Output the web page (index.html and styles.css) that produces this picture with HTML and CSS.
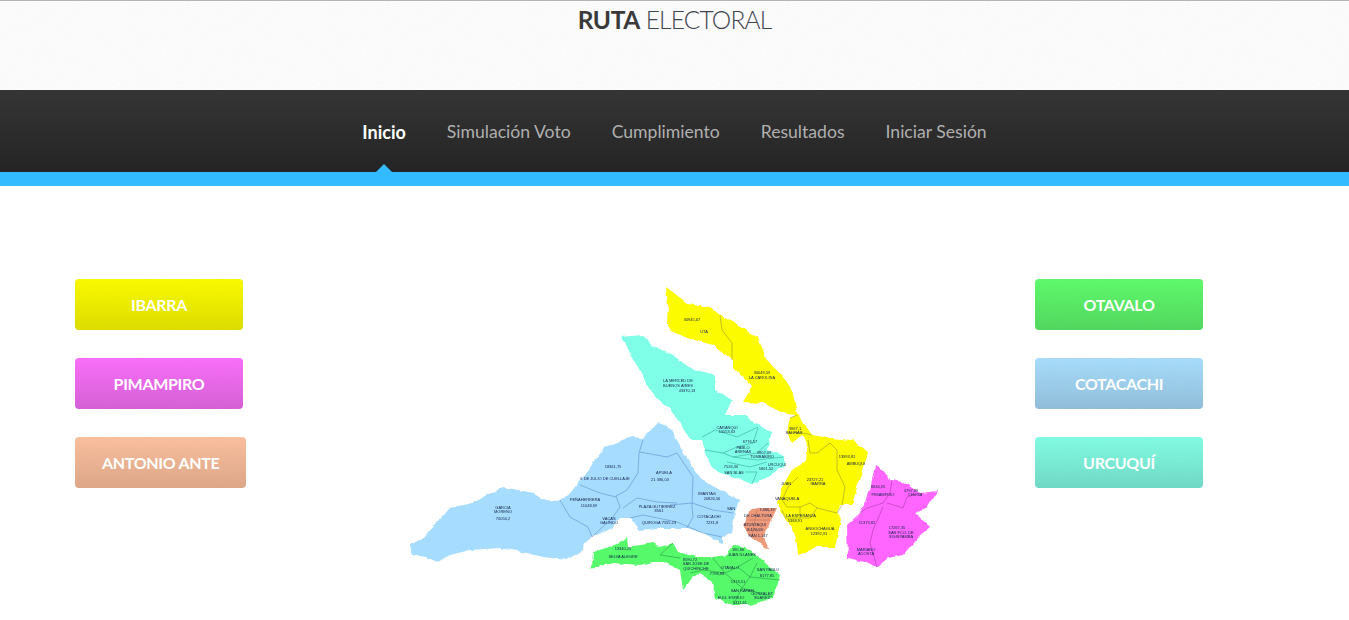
FILE: index.html
```html
<!DOCTYPE html>
<html lang="es">
<head>
<meta charset="utf-8">
<title>Ruta Electoral</title>
<link rel="stylesheet" href="styles.css">
</head>
<body>
<header class="brand">
  <h1 class="brand-title"><strong>RUTA</strong> ELECTORAL</h1>
</header>
<nav class="nav">
  <ul class="nav-list">
    <li class="nav-item nav-item-active"><a href="#">Inicio</a></li>
    <li class="nav-item"><a href="#">Simulación Voto</a></li>
    <li class="nav-item"><a href="#">Cumplimiento</a></li>
    <li class="nav-item"><a href="#">Resultados</a></li>
    <li class="nav-item"><a href="#">Iniciar Sesión</a></li>
  </ul>
</nav>
<div class="nav-stripe"></div>
<main class="content">
  <div class="canton-col">
    <a class="btn btn-ibarra" href="#">IBARRA</a>
    <a class="btn btn-pimampiro" href="#">PIMAMPIRO</a>
    <a class="btn btn-ante" href="#">ANTONIO ANTE</a>
  </div>
  <svg class="map" viewBox="400 279 560 341" width="560" height="341" role="img" aria-label="Mapa de Imbabura">
    <defs>
      <filter id="rough" x="-5%" y="-5%" width="110%" height="110%">
        <feTurbulence type="fractalNoise" baseFrequency="0.11" numOctaves="2" seed="4"/>
        <feDisplacementMap in="SourceGraphic" scale="4" xChannelSelector="R" yChannelSelector="G"/>
        <feGaussianBlur stdDeviation="0.6"/>
      </filter>
      <filter id="soft"><feGaussianBlur stdDeviation="0.3"/></filter>
    </defs>
    <g filter="url(#rough)">
      <polygon class="z-blue" points="410,545 425,537 435,525 450,508 473,503 503,487 533,493 550,502 567,497 583,477 605,447 630,437 643,438 658,423 670,427 677,440 688,460 702,480 720,490 739,500 735,513 732,533 722,537 722,543 703,533 687,528 677,528 657,528 640,530 630,518 620,518 613,528 592,537 585,543 583,550 567,560 543,557 523,552 500,548 470,550 450,555 437,562 427,557 412,555"/>
      <polygon class="z-turq" points="620,337 643,335 653,347 670,353 690,368 715,375 715,390 732,400 725,415 747,415 753,423 772,432 767,450 785,456 785,465 770,475 752,484 733,477 713,470 705,453 702,440 690,440 683,428 670,408 663,405 648,387 638,367 630,355 625,342"/>
      <polygon class="z-yellow" points="666,287 670,290 687,303 710,307 720,315 745,330 758,338 767,360 783,377 793,393 797,413 812,435 830,438 852,440 868,453 860,477 852,505 840,505 838,513 841,520 835,547 817,547 798,555 797,543 792,527 785,518 777,503 782,487 792,470 805,462 807,440 802,435 792,443 787,432 790,418 795,415 783,413 763,403 743,402 752,387 733,367 733,360 713,345 687,338 670,330 667,323 668,305"/>
      <polygon class="z-green" points="580,568 592,567 593,552 620,543 627,537 628,547 653,543 660,547 673,543 678,552 697,557 712,557 727,555 735,545 745,547 753,553 770,567 780,575 777,587 773,598 750,605 733,605 715,598 712,582 700,573 693,577 683,590 680,570 670,565 663,562 653,562 640,565 613,563 597,567"/>
      <polygon class="z-magenta" points="875,465 883,470 890,480 903,482 920,493 938,491 928,507 915,513 930,527 918,537 903,555 888,558 877,567 865,562 848,558 847,525 860,513 870,490"/>
      <polygon class="z-orange" points="748,510 758,508 777,508 770,523 763,537 770,550 750,537 744,527"/>
    </g>
    <g filter="url(#soft)">
      <path class="b-blue" d="M643 440L639 453 638 473 627 490 616 496 620 507 613 517 592 537M580 485L600 493 616 497M560 500L570 517 588 527 592 537M640 452L667 457 677 453 683 462 693 477 692 507 693 517 687 528M670 505L692 503 713 510 733 513M623 508L637 498 657 502 677 503M630 518L643 515 677 522 703 533 722 537"/>
      <path class="b-yellow" d="M720 315L722 330 732 343 732 360M790 418L797 415M787 432L803 433 812 435M808 440L810 453 817 453 830 443 837 450 837 470 845 487 842 505 837 513 817 508 810 503 800 507 787 507 782 500 788 487 798 477M782 510L785 518 800 518 800 507M817 508L810 518 800 518"/>
      <path class="b-magenta" d="M892 480L890 493 883 503 867 508 860 513M883 507L873 530 870 543 877 567M887 503L903 508 907 497 920 493"/>
      <path class="b-green" d="M712 557L725 573 738 567 753 558M725 573L703 570 690 573M738 567L750 577 780 580M750 577L742 588 733 605M725 573L742 588 773 597M757 563L750 577M660 555L673 543M660 555L680 558"/>
      <path class="b-turq" d="M702 437L715 430 737 437 758 427M705 450L723 453 737 447 753 443 758 428M723 453L733 457 757 453 768 443M733 457L757 460 783 457M727 462L750 467 767 462M752 484L757 472 745 472"/>
      <path class="b-orange" d="M748 520L770 520M746 530L765 530M757 510L752 535"/>
      <g class="lbl">
        <text x="503" y="509">GARCIA</text><text x="503" y="513">MORENO</text><text x="503" y="520">70050,2</text>
        <text x="613" y="468">18361,75</text><text x="605" y="480">6 DE JULIO DE CUELLAJE</text>
        <text x="664" y="474">APUELA</text><text x="660" y="481">21 386,03</text>
        <text x="585" y="501">PEÑAHERRERA</text><text x="589" y="507">11048,69</text>
        <text x="609" y="520">VACAS</text><text x="609" y="524">GALINDO</text>
        <text x="657" y="508">PLAZA GUTIERREZ</text><text x="659" y="512">8561</text>
        <text x="659" y="524">QUIROGA 7555,23</text>
        <text x="707" y="495">IMANTAG</text><text x="712" y="500">20826,56</text><text x="731" y="510">SAN</text>
        <text x="709" y="518">COTACACHI</text><text x="712" y="524">7231,8</text>
        <text x="623" y="550">13340,25</text><text x="623" y="558">SELVA ALEGRE</text>
        <text x="692" y="321">30945,67</text><text x="704" y="333">UTA</text>
        <text x="762" y="374">30049,59</text><text x="762" y="379">LA CAROLINA</text>
        <text x="678" y="382">LA MERCED DE</text><text x="678" y="387">BUENOS AIRES</text><text x="687" y="392">43370,13</text>
        <text x="727" y="429">CARANQUI</text><text x="727" y="433">10553,63</text>
        <text x="750" y="443">6776,57</text><text x="743" y="449">PABLO</text><text x="743" y="453">ARENAS</text>
        <text x="764" y="454">3802,09</text><text x="762" y="458">TUMBABIRO</text>
        <text x="731" y="468">7526,36</text><text x="734" y="474">SAN BLAS</text>
        <text x="777" y="466">URCUQUI</text><text x="766" y="470">5861,52</text>
        <text x="795" y="430">3967,1</text><text x="794" y="434">SALINAS</text>
        <text x="847" y="458">13993,81</text><text x="856" y="465">AMBUQUI</text>
        <text x="815" y="481">23727,21</text><text x="818" y="485">IBARRA</text>
        <text x="786" y="485">JUAN</text><text x="787" y="500">VANAQUELA</text>
        <text x="801" y="517">LA ESPERANZA</text><text x="795" y="522">5368,91</text>
        <text x="820" y="530">ANGOCHAGUA</text><text x="819" y="535">12392,91</text>
        <text x="878" y="488">8634,95</text><text x="883" y="496">PIMAMPIRO</text>
        <text x="911" y="492">4797,89</text><text x="915" y="496">CHUGA</text>
        <text x="867" y="524">11379,82</text>
        <text x="897" y="529">17267,35</text><text x="901" y="534">SAN FCO. DE</text><text x="901" y="538">SIGSIPAMBA</text>
        <text x="866" y="551">MARIANO</text><text x="866" y="555">ACOSTA</text>
        <text x="767" y="511">7.486,19</text><text x="758" y="517">DE CHALTURA</text>
        <text x="755" y="526">ATUNTAQUI</text><text x="755" y="531">8.170,59</text><text x="758" y="537">SAN 1.147</text>
        <text x="690" y="561">8590,72</text><text x="696" y="565">SAN JOSE DE</text><text x="696" y="570">QUICHINCHE</text>
        <text x="730" y="569">OTAVALO</text><text x="717" y="575">7798,88</text>
        <text x="768" y="571">SAN PABLO</text><text x="767" y="577">8177,85</text>
        <text x="738" y="551">190,86</text><text x="742" y="556">JUAN ILLANES</text>
        <text x="738" y="583">1374,51</text><text x="743" y="592">SAN RAFAEL</text>
        <text x="762" y="595">GONZALEZ</text><text x="762" y="599">SUAREZ</text>
        <text x="731" y="599">EUG. ESPEJO</text><text x="740" y="604">5411,61</text>
      </g>
    </g>
  </svg>
  <div class="canton-col">
    <a class="btn btn-otavalo" href="#">OTAVALO</a>
    <a class="btn btn-cotacachi" href="#">COTACACHI</a>
    <a class="btn btn-urcuqui" href="#">URCUQUÍ</a>
  </div>
</main>
</body>
</html>
```
FILE: styles.css
```css
:root {
  --noise: url("data:image/svg+xml,%3Csvg xmlns='http://www.w3.org/2000/svg' width='200' height='200'%3E%3Cfilter id='n'%3E%3CfeTurbulence type='fractalNoise' baseFrequency='.8' numOctaves='2' stitchTiles='stitch'/%3E%3CfeColorMatrix values='0 0 0 0 0 0 0 0 0 0 0 0 0 0 0 0 0 0 .035 0'/%3E%3C/filter%3E%3Crect width='200' height='200' filter='url(%23n)'/%3E%3C/svg%3E");
}
* { box-sizing: border-box; }
html, body { margin: 0; padding: 0; height: 620px; overflow: hidden; background: #fff; }
body { font-family: "Lato", "Open Sans", sans-serif; }

.brand {
  height: 90px;
  border-top: 1px solid #b5b5b5;
  background-color: #fff;
  background-image: var(--noise);
  text-align: center;
}
.brand-title {
  margin: 0;
  font-size: 24.5px;
  line-height: 38px;
  font-weight: 300;
  color: #3f4450;
  letter-spacing: -0.8px;
}
.brand-title strong { font-weight: 700; color: #3a3a3a; letter-spacing: -0.4px; }

.nav {
  height: 82px;
  background: var(--noise), linear-gradient(#363636, #252525);
}
.nav-list {
  display: flex;
  justify-content: center;
  gap: 41px;
  margin: 0;
  padding: 0;
  list-style: none;
}
.nav-item {
  position: relative;
  height: 82px;
  line-height: 84px;
  font-size: 17.6px;
  font-weight: 400;
}
.nav-item a { color: #b0b0b0; text-decoration: none; }
.nav-item-active a { color: #fff; font-weight: 700; font-size: 18px; }
.nav-item-active::after {
  content: "";
  position: absolute;
  left: 50%;
  bottom: 0;
  margin-left: -8px;
  border-left: 8px solid transparent;
  border-right: 8px solid transparent;
  border-bottom: 8px solid #33bbff;
}
.nav-stripe { height: 14px; background: #33bbff; }

.content {
  display: grid;
  grid-template-columns: 325px 560px auto;
  padding: 93px 0 0 75px;
}
.map { display: block; }
.canton-col {
  display: flex;
  flex-direction: column;
  align-items: flex-start;
  gap: 28px;
}
.canton-col:last-child { margin-left: 75px; }
.btn {
  display: block;
  min-width: 168px;
  height: 51px;
  padding: 0 27px;
  border-radius: 4px;
  line-height: 52px;
  text-align: center;
  font-size: 16px;
  font-weight: 700;
  color: #fff;
  text-decoration: none;
  white-space: nowrap;
  letter-spacing: -0.32px;
}
.btn-ibarra { background: var(--noise), linear-gradient(#fdfd00, #e0e000); }
.btn-pimampiro { background: var(--noise), linear-gradient(#fd70fd, #d862d8); }
.btn-ante { background: var(--noise), linear-gradient(#fdc2a0, #e0a98a); }
.btn-otavalo { background: var(--noise), linear-gradient(#60fd6e, #54da60); }
.btn-cotacachi { background: var(--noise), linear-gradient(#aae0ff, #92c0dc); }
.btn-urcuqui { background: var(--noise), linear-gradient(#84ffe6, #72dcc8); }

.z-blue { fill: #a6dcff; }
.z-turq { fill: #80ffe8; }
.z-yellow { fill: #fdfb00; }
.z-green { fill: #55f96a; }
.z-magenta { fill: #ff66ff; }
.z-orange { fill: #ee9a7a; }

.b-blue, .b-yellow, .b-magenta, .b-green, .b-turq, .b-orange { fill: none; stroke-width: .6; }
.b-blue { stroke: #5a90cc; }
.b-yellow { stroke: #9a9a30; }
.b-magenta { stroke: #a83aa8; }
.b-green { stroke: #2a9a48; }
.b-turq { stroke: #34a89c; }
.b-orange { stroke: #b87258; }

.lbl text {
  font-family: "Liberation Sans", sans-serif;
  font-size: 4px;
  text-anchor: middle;
  fill: #14244a;
}
```
